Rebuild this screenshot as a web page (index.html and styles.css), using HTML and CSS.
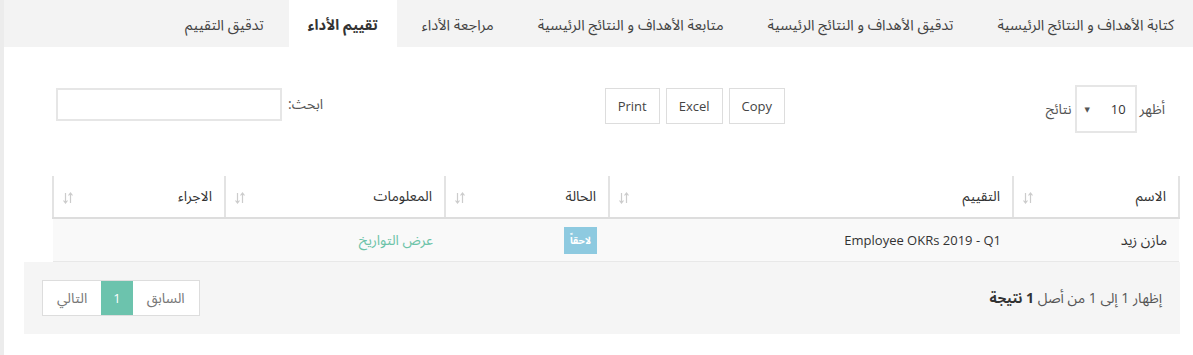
FILE: index.html
```html
<!DOCTYPE html>
<html dir="rtl" lang="ar">
<head>
  <meta charset="utf-8">
  <title>تقييم الأداء</title>
  <link rel="stylesheet" href="styles.css">
</head>
<body>
  <div class="page">
    <ul class="tabs">
      <li>كتابة الأهداف و النتائج الرئيسية</li>
      <li>تدقيق الأهداف و النتائج الرئيسية</li>
      <li>متابعة الأهداف و النتائج الرئيسية</li>
      <li>مراجعة الأداء</li>
      <li class="active">تقييم الأداء</li>
      <li>تدقيق التقييم</li>
    </ul>

    <div class="panel">
      <div class="wrapper">
        <div class="controls">
          <div class="length">
            <span>أظهر</span>
            <span class="select"><span>10</span><span class="arrow">▼</span></span>
            <span>نتائج</span>
          </div>
          <div class="buttons">
            <button>Copy</button>
            <button>Excel</button>
            <button>Print</button>
          </div>
          <div class="filter">
            <label for="search">ابحث:</label>
            <input type="text" id="search">
          </div>
        </div>

        <table class="data">
          <thead>
            <tr>
              <th class="col-name">الاسم <svg class="sort" width="10" height="12" viewBox="0 0 10 12"><path d="M2.5 1v10M0.5 8.5l2 2.5 2-2.5M7.5 11V1M5.5 3.5l2-2.5 2 2.5" fill="none" stroke="#ccc" stroke-width="1.2"/></svg></th>
              <th class="col-review">التقييم <svg class="sort" width="10" height="12" viewBox="0 0 10 12"><path d="M2.5 1v10M0.5 8.5l2 2.5 2-2.5M7.5 11V1M5.5 3.5l2-2.5 2 2.5" fill="none" stroke="#ccc" stroke-width="1.2"/></svg></th>
              <th class="col-status">الحالة <svg class="sort" width="10" height="12" viewBox="0 0 10 12"><path d="M2.5 1v10M0.5 8.5l2 2.5 2-2.5M7.5 11V1M5.5 3.5l2-2.5 2 2.5" fill="none" stroke="#ccc" stroke-width="1.2"/></svg></th>
              <th class="col-info">المعلومات <svg class="sort" width="10" height="12" viewBox="0 0 10 12"><path d="M2.5 1v10M0.5 8.5l2 2.5 2-2.5M7.5 11V1M5.5 3.5l2-2.5 2 2.5" fill="none" stroke="#ccc" stroke-width="1.2"/></svg></th>
              <th class="col-action">الاجراء <svg class="sort" width="10" height="12" viewBox="0 0 10 12"><path d="M2.5 1v10M0.5 8.5l2 2.5 2-2.5M7.5 11V1M5.5 3.5l2-2.5 2 2.5" fill="none" stroke="#ccc" stroke-width="1.2"/></svg></th>
            </tr>
          </thead>
          <tbody>
            <tr>
              <td>مازن زيد</td>
              <td class="latin">Employee OKRs 2019 - Q1</td>
              <td><span class="badge">لاحقاً</span></td>
              <td><a href="#">عرض التواريخ</a></td>
              <td></td>
            </tr>
          </tbody>
        </table>

        <div class="footer">
          <div class="info">إظهار 1 إلى 1 من أصل <b>1</b> <b>نتيجة</b></div>
          <div class="pagination">
            <span>السابق</span>
            <span class="current">1</span>
            <span>التالي</span>
          </div>
        </div>
      </div>
    </div>
  </div>
</body>
</html>
```

FILE: styles.css
```css
/* صفحة تقييم الأداء */
body {
  margin: 0;
  background-color: #ececec;
  font-family: "Open Sans", "Noto Sans Arabic", "DejaVu Sans", sans-serif;
  font-size: 14px;
  color: #333;
}

.page {
  margin-left: 4px;
  min-height: 355px;
  background-color: #fff;
}

.tabs {
  display: flex;
  margin: 0;
  padding: 0;
  list-style: none;
  height: 47px;
  background-color: #f3f3f3;
}

.tabs li {
  padding: 10px 19px 0;
  margin-left: 6px;
  font-size: 14.6px;
  color: #444;
  white-space: nowrap;
}

.tabs li.active {
  background-color: #fff;
  font-weight: bold;
  color: #333;
}

.panel {
  padding: 38px 13px 20px 20px;
}

.controls {
  display: flex;
  align-items: flex-start;
  height: 91px;
}

.length {
  display: flex;
  align-items: center;
  width: 385px;
  padding-right: 15px;
  box-sizing: border-box;
  color: #555;
}

.length .select {
  display: flex;
  justify-content: space-between;
  align-items: center;
  width: 62px;
  height: 48px;
  margin: 0 3px;
  padding: 0 9px 0 8px;
  box-sizing: border-box;
  border: 2px solid #e6e6e6;
  font-size: 13px;
  color: #333;
}

.length .arrow {
  font-size: 7px;
  color: #555;
}

.buttons {
  display: flex;
  gap: 6px;
  width: 385px;
  padding: 3px 10px 0;
  box-sizing: border-box;
}

.buttons button {
  height: 36px;
  padding: 0 12px;
  background-color: #fff;
  border: 1px solid #ddd;
  font-family: inherit;
  font-size: 13px;
  color: #444;
}

.filter {
  display: flex;
  justify-content: flex-end;
  align-items: center;
  flex: 1;
  padding: 3px 0 0 32px;
  color: #555;
}

.filter input {
  width: 226px;
  height: 33px;
  margin-right: 6px;
  box-sizing: border-box;
  border: 2px solid #e6e6e6;
}

.data {
  width: 1126px;
  margin-left: 30px;
  border-collapse: collapse;
  table-layout: fixed;
}

.data th {
  position: relative;
  height: 42px;
  padding: 0 12px;
  box-sizing: border-box;
  text-align: right;
  font-weight: normal;
  color: #333;
  border-left: 2px solid #e3e3e3;
  border-bottom: 2px solid #ddd;
}

.data th:first-child {
  border-right: 2px solid #e3e3e3;
}

.data .sort {
  position: absolute;
  left: 9px;
  top: 16px;
}

.col-name { width: 166px; }
.col-review { width: 404px; }
.col-status { width: 164px; }
.col-info { width: 220px; }
.col-action { width: 172px; }

.data td {
  height: 42px;
  padding: 0 12px;
  background-color: #f9f9f9;
  border-bottom: 1px solid #e8e8e8;
}

.data td.latin {
  font-size: 13px;
}

.data td a {
  color: #6cc3a8;
  text-decoration: none;
}

.badge {
  display: inline-block;
  padding: 3px 6px;
  background-color: #8ecae0;
  color: #fff;
  font-size: 10px;
  font-weight: bold;
}

.footer {
  display: flex;
  justify-content: space-between;
  align-items: center;
  height: 72px;
  padding: 0 18px;
  background-color: #f5f5f5;
}

.info {
  color: #555;
}

.info b {
  color: #333;
}

.pagination {
  display: flex;
  border: 1px solid #ddd;
  background-color: #fff;
}

.pagination span {
  height: 34px;
  line-height: 34px;
  padding: 0 14px;
  color: #777;
}

.pagination span.current {
  padding: 0 12px;
  background-color: #6cc3ad;
  color: #fff;
  font-size: 13px;
}
```
